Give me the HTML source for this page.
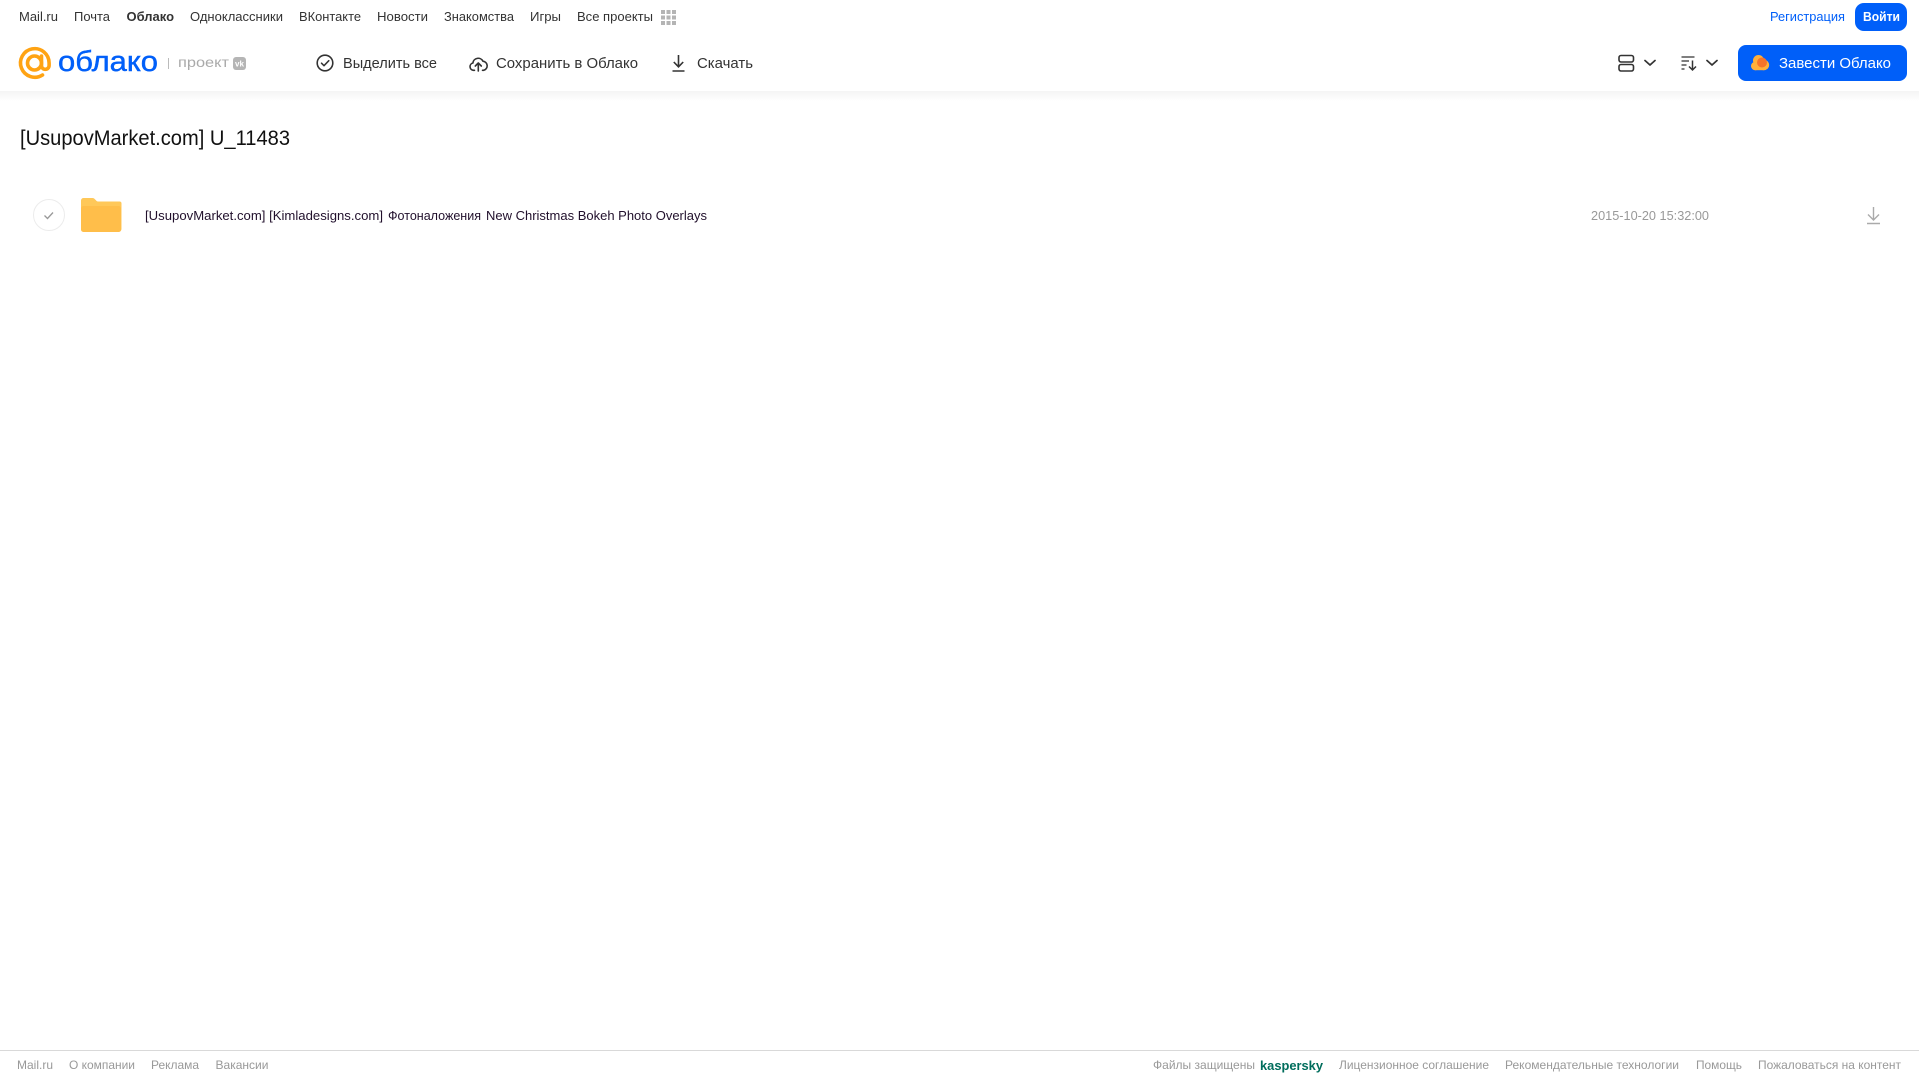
<!DOCTYPE html>
<html lang="ru"><head><meta charset="utf-8"><title>Облако</title>
<style>
html,body{margin:0;padding:0;background:#fff;width:1919px;height:1079px;overflow:hidden}
svg{display:block;position:absolute;left:0;top:0}
text{font-family:"Liberation Sans",sans-serif;white-space:pre}
.n{font-size:13px;fill:#333}
.t{font-size:14.5px;fill:#333}
.f{font-size:12px;fill:#999}
</style></head><body>
<svg width="1919" height="1079" viewBox="0 0 1919 1079" xmlns="http://www.w3.org/2000/svg">
<defs><linearGradient id="sh" x1="0" y1="0" x2="0" y2="1"><stop offset="0" stop-color="#f4f4f4"/><stop offset="1" stop-color="#fff"/></linearGradient></defs>
<rect x="0" y="91" width="1919" height="10" fill="url(#sh)"/>

<text class="n" x="19" y="21" textLength="39" lengthAdjust="spacingAndGlyphs">Mail.ru</text>
<text class="n" x="74" y="21" textLength="36" lengthAdjust="spacingAndGlyphs">Почта</text>
<text class="n" x="126.500" y="21" textLength="47.500" lengthAdjust="spacingAndGlyphs" font-weight="700">Облако</text>
<text class="n" x="190" y="21" textLength="93" lengthAdjust="spacingAndGlyphs">Одноклассники</text>
<text class="n" x="299" y="21" textLength="62" lengthAdjust="spacingAndGlyphs">ВКонтакте</text>
<text class="n" x="377" y="21" textLength="51" lengthAdjust="spacingAndGlyphs">Новости</text>
<text class="n" x="444" y="21" textLength="70" lengthAdjust="spacingAndGlyphs">Знакомства</text>
<text class="n" x="530" y="21" textLength="31" lengthAdjust="spacingAndGlyphs">Игры</text>
<text class="n" x="577" y="21" textLength="76" lengthAdjust="spacingAndGlyphs">Все проекты</text>
<g fill="#b4b4b4"><rect x="661" y="10" width="4" height="4"/><rect x="666.500" y="10" width="4" height="4"/><rect x="672" y="10" width="4" height="4"/><rect x="661" y="15.500" width="4" height="4"/><rect x="666.500" y="15.500" width="4" height="4"/><rect x="672" y="15.500" width="4" height="4"/><rect x="661" y="21" width="4" height="4"/><rect x="666.500" y="21" width="4" height="4"/><rect x="672" y="21" width="4" height="4"/></g>

<text x="1770" y="21" font-size="13" fill="#005ff9" textLength="75" lengthAdjust="spacingAndGlyphs">Регистрация</text>
<rect x="1855" y="3" width="52" height="28" rx="9" fill="#005ff9"/>
<text x="1863" y="21" font-size="13" font-weight="700" fill="#fff" textLength="37" lengthAdjust="spacingAndGlyphs">Войти</text>

<g fill="none" stroke="#ffa313" stroke-width="3.600" stroke-linecap="round">
<circle cx="34.500" cy="63" r="7"/>
<path d="M41.500 56V65.500a3.800 3.800 0 0 0 7.600 0V63A14.300 14.300 0 1 0 42.500 75"/>
</g>
<text x="58" y="71" font-size="29" fill="#005ff9" stroke="#005ff9" stroke-width=".45" textLength="100" lengthAdjust="spacingAndGlyphs">облако</text>
<rect x="168" y="58" width="1" height="11" fill="#bbb"/>
<text x="178" y="67" font-size="14" fill="#aaa" textLength="51" lengthAdjust="spacingAndGlyphs">проект</text>
<rect x="233" y="57" width="13" height="13" rx="3" fill="#b5b5b5"/>
<text x="235" y="66.500" font-size="8" font-weight="700" fill="#fff" textLength="9" lengthAdjust="spacingAndGlyphs">vk</text>

<circle cx="325" cy="63" r="7.800" fill="none" stroke="#333" stroke-width="1.600"/>
<path d="M321.500 63.200l2.500 2.500 4.800-5" fill="none" stroke="#333" stroke-width="1.500" stroke-linecap="round" stroke-linejoin="round"/>
<text class="t" x="343" y="68" textLength="94" lengthAdjust="spacingAndGlyphs">Выделить все</text>

<path d="M474.500 70.300h-1a3.700 3.700 0 0 1-.6-7.300 5.300 5.300 0 0 1 10-1.800 4.600 4.600 0 0 1 .6 9.100h-1" fill="none" stroke="#333" stroke-width="1.600" stroke-linecap="round" stroke-linejoin="round"/>
<path d="M478.300 71V63.500M475.300 66l3-3 3 3" fill="none" stroke="#333" stroke-width="1.600" stroke-linecap="round" stroke-linejoin="round"/>
<text class="t" x="496" y="68" textLength="142" lengthAdjust="spacingAndGlyphs">Сохранить в Облако</text>

<path d="M678.500 55V66.500M673.800 62l4.700 4.800 4.700-4.800M672.500 71h12" fill="none" stroke="#333" stroke-width="1.600"/>
<text class="t" x="697" y="68" textLength="56" lengthAdjust="spacingAndGlyphs">Скачать</text>

<rect x="1619" y="55.500" width="14.500" height="6.500" rx="2" fill="none" stroke="#333" stroke-width="1.600"/>
<rect x="1619" y="64.500" width="14.500" height="6.500" rx="2" fill="none" stroke="#333" stroke-width="1.600"/>
<path d="M1645 60.500l5 4.500 5-4.500M1707 60.500l5 4.500 5-4.500" fill="none" stroke="#333" stroke-width="1.700" stroke-linecap="round" stroke-linejoin="round"/>
<path d="M1681.500 57h13M1681.500 61h7.500M1681.500 65h5M1681.500 69h3" fill="none" stroke="#333" stroke-width="1.300"/>
<path d="M1692.500 60.500V69.500M1689 66.500l3.500 3.500 3.500-3.500" fill="none" stroke="#333" stroke-width="1.500"/>

<rect x="1738" y="45" width="169" height="36" rx="8" fill="#005ff9"/>
<g fill="#ffb03a"><circle cx="1758.500" cy="60.500" r="5.500"/><circle cx="1755.300" cy="66" r="4.300"/><circle cx="1764" cy="65" r="5.200"/><rect x="1755" y="64" width="9" height="6.200"/></g>
<circle cx="1762" cy="62.500" r="5" fill="#f5742a"/>
<text x="1779" y="68" font-size="14.500" fill="#fff" textLength="112" lengthAdjust="spacingAndGlyphs">Завести Облако</text>

<text x="20" y="145" font-size="21" fill="#111" textLength="270" lengthAdjust="spacingAndGlyphs">[UsupovMarket.com] U_11483</text>

<circle cx="49" cy="215" r="15.500" fill="#fff" stroke="#ececec" stroke-width="1"/>
<path d="M44.500 215.500l3 3 5.500-6" fill="none" stroke="#999" stroke-width="1.300"/>
<path d="M81 200.500a2.500 2.500 0 0 1 2.500-2.500h9c2.500 0 3.500 3.500 5.500 3.500h21.500a2 2 0 0 1 2 2V229a3 3 0 0 1-3 3H84a3 3 0 0 1-3-3z" fill="#ffc859"/>
<rect x="81" y="206" width="40" height="26" rx="2.500" fill="#ffbe4a"/>

<text x="145" y="220" font-size="13" fill="#21102c" textLength="238" lengthAdjust="spacingAndGlyphs">[UsupovMarket.com] [Kimladesigns.com]</text>
<text x="388" y="220" font-size="13" fill="#21102c" textLength="93" lengthAdjust="spacingAndGlyphs">Фотоналожения</text>
<text x="486" y="220" font-size="13" fill="#21102c" textLength="221" lengthAdjust="spacingAndGlyphs">New Christmas Bokeh Photo Overlays</text>
<text x="1591" y="220" font-size="13" fill="#999" textLength="118" lengthAdjust="spacingAndGlyphs">2015-10-20 15:32:00</text>
<path d="M1873.500 207V220M1868 214.500l5.500 5.500 5.500-5.500M1867 223.500h13" fill="none" stroke="#aaa" stroke-width="1.400"/>

<rect x="0" y="1050" width="1919" height="1" fill="#d9d9d9"/>
<text class="f" x="17" y="1069" textLength="36" lengthAdjust="spacingAndGlyphs">Mail.ru</text>
<text class="f" x="69" y="1069" textLength="66" lengthAdjust="spacingAndGlyphs">О компании</text>
<text class="f" x="151" y="1069" textLength="48" lengthAdjust="spacingAndGlyphs">Реклама</text>
<text class="f" x="215.500" y="1069" textLength="53" lengthAdjust="spacingAndGlyphs">Вакансии</text>
<text class="f" x="1153" y="1069" textLength="102" lengthAdjust="spacingAndGlyphs">Файлы защищены</text>
<text x="1260" y="1070" font-size="13" font-weight="700" fill="#006d5c" textLength="63" lengthAdjust="spacingAndGlyphs">kaspersky</text>
<text class="f" x="1339" y="1069" textLength="150" lengthAdjust="spacingAndGlyphs">Лицензионное соглашение</text>
<text class="f" x="1505" y="1069" textLength="174" lengthAdjust="spacingAndGlyphs">Рекомендательные технологии</text>
<text class="f" x="1696" y="1069" textLength="46" lengthAdjust="spacingAndGlyphs">Помощь</text>
<text class="f" x="1758" y="1069" textLength="143" lengthAdjust="spacingAndGlyphs">Пожаловаться на контент</text>
</svg>
</body></html>
